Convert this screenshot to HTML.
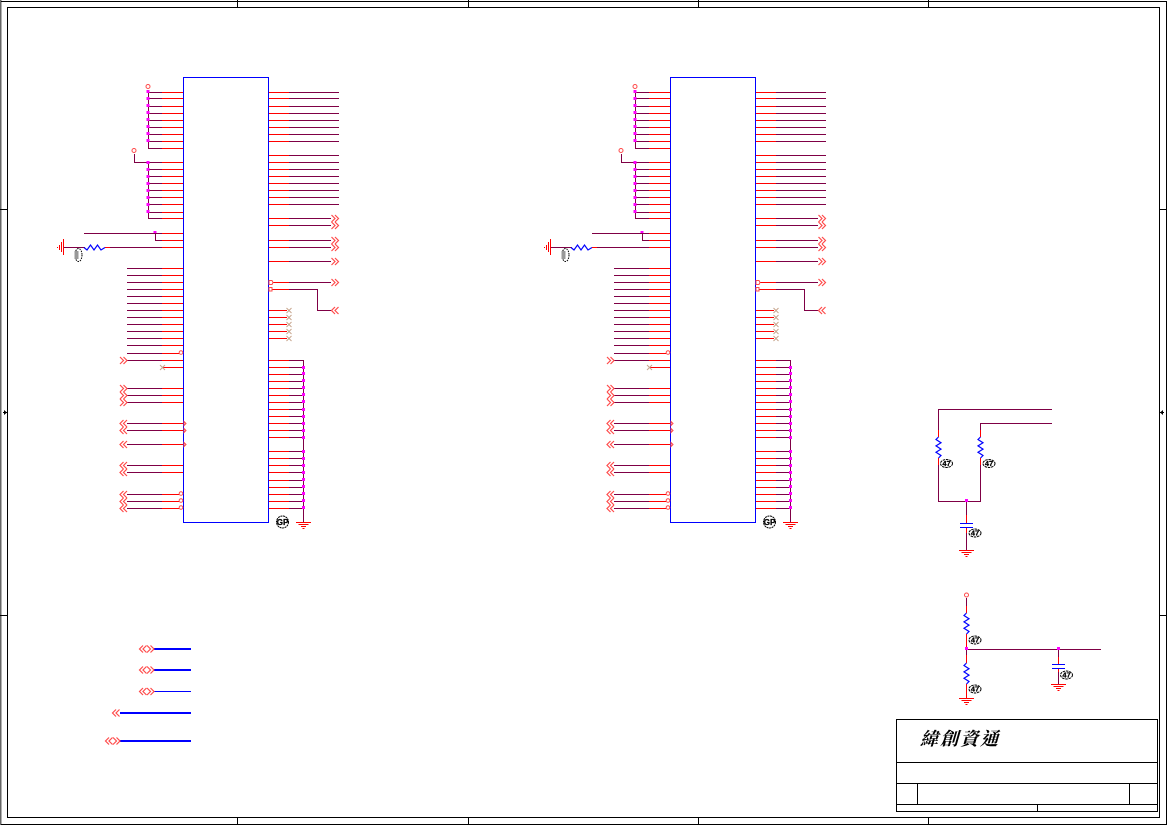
<!DOCTYPE html>
<html>
<head>
<meta charset="utf-8">
<title>Schematic</title>
<style>
html,body{margin:0;padding:0;background:#fff;width:1167px;height:825px;overflow:hidden}
svg{display:block}
text{font-family:"Liberation Sans",sans-serif}
.t{font-family:"Liberation Serif","Noto Serif CJK TC",serif;font-size:18px;font-weight:bold;letter-spacing:2px;fill:#000}
.l{font-size:7.5px;font-weight:bold;fill:#000;stroke:#000;stroke-width:.25;text-anchor:middle}
</style>
</head>
<body>
<svg width="1167" height="825" viewBox="0 0 1167 825" xmlns="http://www.w3.org/2000/svg">
<defs>
<path id="gt" fill="none" stroke="#ff4a4a" stroke-width="1.2" d="M0-3.5l3.5 3.5-3.5 3.5M3.5-3.5L7 0 3.5 3.5"/>
<path id="lt" fill="none" stroke="#ff4a4a" stroke-width="1.2" d="M3.5-3.5L0 0l3.500 3.500M7-3.500L3.500 0 7 3.500"/>
<path id="gnd" fill="none" stroke="#f00" shape-rendering="crispEdges" d="M-7.5.5h15M-5 2.5h10M-2.5 4.5h5M-1 6.5h2"/>
<path id="rv" fill="none" stroke="#00f" stroke-width="1.2" d="M0 0l-2.5 2.5 5 3.2-5 3.2 5 3.2-5 3.2 5 3.2-2.5 2.5"/>
<g id="lab"><ellipse cx="0" cy="0" rx="6" ry="4" fill="#fff" stroke="#000" stroke-width="1" stroke-dasharray="2.500 .8"/><text class="l" x="0" y="2.600">47</text></g>
<g id="chip">
<!-- purple wires -->
<path fill="none" stroke="#7f0045" shape-rendering="crispEdges" d="
M148 92.5h14M148 98.5h14M148 106.5h14M148 113.5h14M148 120.5h14M148 127.5h14M148 134.5h14M148 141.5h14M148 148.5h14
M148 162.5h14M148 169.5h14M148 176.5h14M148 183.5h14M148 190.5h14M148 197.5h14M148 204.5h14M148 212.5h14M148 218.5h14
M148.5 92v57M148.5 162v57M134.5 154v9M134 162.5h14
M155.5 233v8M155 240.5h7M110 247.5h52M64 247.5h21
M127 268.5h35M127 275.5h35M127 282.5h35M127 289.5h35M127 296.5h35M127 303.5h35M127 310.5h35M127 317.5h35M127 324.5h35M127 331.5h35M127 338.5h35M127 345.5h35M127 353.5h35M127 360.5h35
M127 388.5h35M127 395.5h35M127 402.5h35M127 423.5h35M127 430.5h35M127 444.5h35M127 465.5h35M127 472.5h35M127 494.5h35M127 501.5h35M127 508.5h35
M289 92.5h50M289 98.5h50M289 106.5h50M289 113.5h50M289 120.5h50M289 127.5h50M289 134.5h50M289 141.5h50
M289 155.5h50M289 162.5h50M289 169.5h50M289 176.5h50M289 183.5h50M289 190.5h50M289 197.5h50M289 204.5h50
M289 218.5h42M289 225.5h42M289 240.5h42M289 247.5h42M289 261.5h42M289 282.5h42
M289 289.5h28.5v21h13.5
M289 360.5h14M289 367.5h14M289 374.5h14M289 381.5h14M289 388.5h14M289 395.5h14M289 402.5h14M289 409.5h14M289 416.5h14M289 423.5h14M289 430.5h14M289 437.5h14
M289 451.5h14M289 458.5h14M289 465.5h14M289 472.5h14M289 480.5h14M289 487.5h14M289 494.5h14M289 501.5h14M289 508.5h14
M303.5 360v162"/>
<!-- red wires -->
<path fill="none" stroke="#f00" shape-rendering="crispEdges" d="
M162 92.5h21M162 98.5h21M162 106.5h21M162 113.5h21M162 120.5h21M162 127.5h21M162 134.5h21M162 141.5h21M162 148.5h21
M162 162.5h21M162 169.5h21M162 176.5h21M162 183.5h21M162 190.5h21M162 197.5h21M162 204.5h21M162 212.5h21M162 218.5h21
M162 233.5h21M162 240.5h21M162 247.5h21M105 247.5h5
M162 268.5h21M162 275.5h21M162 282.5h21M162 289.5h21M162 296.5h21M162 303.5h21M162 310.5h21M162 317.5h21M162 324.5h21M162 331.5h21M162 338.5h21M162 345.5h21M162 353.5h17M162 360.5h21M162 367.5h21
M162 388.5h21M162 395.5h21M162 402.5h21M162 423.5h21M162 430.5h21M162 444.5h21M162 465.5h21M162 472.5h21M162 494.5h17M162 501.5h17M162 508.5h17
M269 92.5h20M269 98.5h20M269 106.5h20M269 113.5h20M269 120.5h20M269 127.5h20M269 134.5h20M269 141.5h20
M269 155.5h20M269 162.5h20M269 169.5h20M269 176.5h20M269 183.5h20M269 190.5h20M269 197.5h20M269 204.5h20
M269 218.5h20M269 225.5h20M269 240.5h20M269 247.5h20M269 261.5h20M272 282.5h17M272 289.5h17
M269 310.5h18M269 317.5h18M269 324.5h18M269 331.5h18M269 338.5h18
M269 360.5h20M269 367.5h20M269 374.5h20M269 381.5h20M269 388.5h20M269 395.5h20M269 402.5h20M269 409.5h20M269 416.5h20M269 423.5h20M269 430.5h20M269 437.5h20
M269 451.5h20M269 458.5h20M269 465.5h20M269 472.5h20M269 480.5h20M269 487.5h20M269 494.5h20M269 501.5h20M269 508.5h20"/>
<!-- chip body -->
<rect x="183.5" y="77.5" width="85" height="445" fill="none" stroke="#00f" shape-rendering="crispEdges"/>
<!-- junction dots -->
<path fill="none" stroke="#f0f" stroke-width="3" shape-rendering="crispEdges" d="
M146.500 91.500h3M146.500 98.500h3M146.500 105.500h3M146.500 112.500h3M146.500 119.500h3M146.500 126.500h3M146.500 133.500h3M146.500 140.500h3
M146.500 162.500h3M146.500 169.500h3M146.500 176.500h3M146.500 183.500h3M146.500 190.500h3M146.500 197.500h3M146.500 204.500h3M146.500 211.500h3M153.500 232.500h3
M302 367.500h3M302 373.500h3M302 380.500h3M302 387.500h3M302 394.500h3M302 401.500h3M302 409.500h3M302 416.500h3M302 423.500h3M302 430.500h3M302 437.500h3
M302 451.500h3M302 458.500h3M302 465.500h3M302 472.500h3M302 479.500h3M302 486.500h3M302 493.500h3M302 500.500h3M302 507.500h3"/>
<!-- open circles -->
<g fill="#fff" stroke="#ff4a4a">
<circle cx="148" cy="86.500" r="2"/><circle cx="134" cy="150.500" r="2"/>
<circle cx="181" cy="352.500" r="1.800"/><circle cx="181" cy="493.500" r="1.800"/><circle cx="181" cy="500.500" r="1.800"/><circle cx="181" cy="507.500" r="1.800"/>
<path d="M269 280.500h3l1 2-1 2h-3zM269 287.500h3v3.500h-3z"/>
<path d="M184 421.500l2 2-2 2zM184 428.500l2 2-2 2zM184 442.500l2 2-2 2z"/>
</g>
<!-- no-connect marks -->
<path fill="none" stroke="#c8a68e" d="M286.500 308l5 5m0-5l-5 5M286.500 315l5 5m0-5l-5 5M286.500 322l5 5m0-5l-5 5M286.500 329l5 5m0-5l-5 5M286.500 336l5 5m0-5l-5 5M160 365l5 5m0-5l-5 5"/>
<!-- chevrons -->
<use href="#gt" x="120" y="360.500"/><use href="#gt" x="120" y="388.500"/><use href="#gt" x="120" y="395.500"/><use href="#gt" x="120" y="402.500"/>
<use href="#lt" x="120" y="423.500"/><use href="#lt" x="120" y="430.500"/><use href="#lt" x="120" y="444.500"/><use href="#lt" x="120" y="465.500"/><use href="#lt" x="120" y="472.500"/><use href="#lt" x="120" y="494.500"/><use href="#lt" x="120" y="501.500"/><use href="#lt" x="120" y="508.500"/>
<use href="#gt" x="331.500" y="218.500"/><use href="#gt" x="331.500" y="225.500"/><use href="#gt" x="331.500" y="240.500"/><use href="#gt" x="331.500" y="247.500"/><use href="#gt" x="331.500" y="261.500"/><use href="#gt" x="331.500" y="282.500"/>
<use href="#lt" x="331.500" y="310.500"/>
<!-- left ground and resistor -->
<path fill="none" stroke="#f00" shape-rendering="crispEdges" d="M63.500 239v16M61.500 242v10M59.500 245v5M57.500 247v1"/>
<path fill="none" stroke="#00f" stroke-width="1.200" d="M84 247.500l3 2.500 3.500-5 3.500 5 3.500-5 3.500 5 4-2.500"/>
<ellipse cx="78.500" cy="255" rx="3.500" ry="6.500" fill="#fff" stroke="#000" stroke-dasharray="1.500 1"/>
<rect x="74.500" y="251" width="4" height="8" fill="#999"/>
<!-- GP tag -->
<circle cx="282.500" cy="522" r="6" fill="#fff" stroke="#000" stroke-dasharray="2 .6"/>
<text class="l" x="282.500" y="525" style="font-size:8px">GP</text>
<use href="#gnd" x="303.500" y="522"/>
</g>
</defs>

<!-- frame -->
<rect x="0" y="0" width="1.500" height="825" fill="#666"/>
<g fill="none" stroke="#000" shape-rendering="crispEdges">
<path d="M1 1.500H1166.500V824.500H1"/>
<rect x="7.500" y="7.500" width="1152" height="810"/>
<path d="M237.500 0v8M468.500 0v8M698.500 0v8M928.500 0v8M237.500 817v8M468.500 817v8M698.500 817v8M928.500 817v8M0 209.500h8M0 615.500h8M1159 209.500h8M1159 615.500h8M3 412.500h5M1159 412.500h5"/>
</g>
<path d="M7 412.500l-3-2.500v5zM1160 412.500l3-2.500v5z" fill="#000"/>

<use href="#chip"/>
<use href="#chip" x="487"/>
<path fill="none" stroke="#7f0045" shape-rendering="crispEdges" d="M84 233.500h78M592 233.500h57"/>

<!-- bottom-left nets -->
<path fill="none" stroke="#00f" stroke-width="2" shape-rendering="crispEdges" d="M154 649h37M154 670h37M120 713h71M120 741h71"/>
<path fill="none" stroke="#00f" shape-rendering="crispEdges" d="M154 691.500h37"/>
<use href="#lt" x="139.500" y="649"/><use href="#gt" x="147" y="649"/>
<use href="#lt" x="139.500" y="670"/><use href="#gt" x="147" y="670"/>
<use href="#lt" x="139.500" y="691.500"/><use href="#gt" x="147" y="691.500"/>
<use href="#lt" x="112.500" y="713"/>
<use href="#lt" x="105.500" y="741"/><use href="#gt" x="113" y="741"/>

<!-- right circuits -->
<path fill="none" stroke="#7f0045" shape-rendering="crispEdges" d="M1052 409.500H938.500V430M1052 423.500H980.500V430M938.500 465v36.500h42V465M966.500 501v14M966.500 533v17M966.500 598v8M966.500 649.500H1101M966.500 649v6M1058.500 649v8M1058.500 672v12"/>
<path fill="none" stroke="#f00" shape-rendering="crispEdges" d="M938.500 430v7M980.500 430v7M938.500 458v7M980.500 458v7M966.500 515v8M966.500 528v5M966.500 606v7M966.500 634v15M966.500 655v8M966.500 684v14M1058.500 657v7M1058.500 669v3"/>
<use href="#rv" x="938.500" y="437"/><use href="#rv" x="980.500" y="437"/><use href="#rv" x="966.500" y="613"/><use href="#rv" x="966.500" y="663"/>
<path fill="none" stroke="#00f" shape-rendering="crispEdges" d="M960 523.500h13M960 527.500h13M1052 664.500h13M1052 668.500h13"/>
<path fill="none" stroke="#f0f" stroke-width="3" shape-rendering="crispEdges" d="M965 500.500h3M965 648.500h3M1057 648.500h3"/>
<circle cx="966.500" cy="595" r="2" fill="#fff" stroke="#ff4a4a"/>
<use href="#gnd" x="966.500" y="550"/><use href="#gnd" x="966.500" y="698"/><use href="#gnd" x="1058.500" y="684"/>
<use href="#lab" x="946.500" y="463.500"/><use href="#lab" x="989" y="463.500"/><use href="#lab" x="975" y="533"/>
<use href="#lab" x="975" y="640"/><use href="#lab" x="975" y="689"/><use href="#lab" x="1066.500" y="675"/>

<!-- title block -->
<g fill="none" stroke="#000" shape-rendering="crispEdges">
<rect x="896.500" y="719.500" width="261" height="92"/>
<path d="M897 762.500h260M897 783.500h260M897 804.500h260M917.500 784v20M1129.500 784v20M1037.500 805v6"/>
</g>
<text class="t" transform="translate(920 745) skewX(-16)" x="0" y="0">緯創資通</text>
</svg>
</body>
</html>
